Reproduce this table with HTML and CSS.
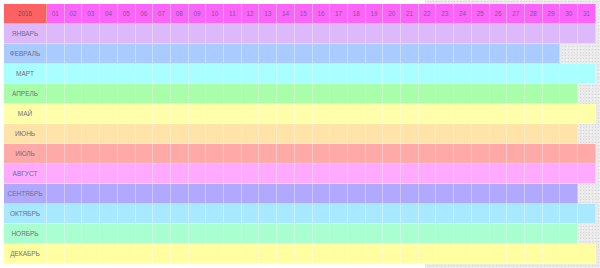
FILE: index.html
```html
<!DOCTYPE html>
<html lang="ru">
<head>
<meta charset="utf-8">
<title>Календарь 2016</title>
<link rel="stylesheet" href="styles.css">
</head>
<body>
<table class="cal">
<colgroup><col class="c-year"><col span="31" class="c-day"></colgroup>
<thead>
<tr class="head"><th class="year">2016</th><th>01</th><th>02</th><th>03</th><th>04</th><th>05</th><th>06</th><th>07</th><th>08</th><th>09</th><th>10</th><th>11</th><th>12</th><th>13</th><th>14</th><th>15</th><th>16</th><th>17</th><th>18</th><th>19</th><th>20</th><th>21</th><th>22</th><th>23</th><th>24</th><th>25</th><th>26</th><th>27</th><th>28</th><th>29</th><th>30</th><th>31</th></tr>
</thead>
<tbody id="body"></tbody>
</table>
<script src="app.js"></script>
</body>
</html>
```
FILE: app.js
```js
var months = [
  ["ЯНВАРЬ", 31, "m1"], ["ФЕВРАЛЬ", 29, "m2"], ["МАРТ", 31, "m3"],
  ["АПРЕЛЬ", 30, "m4"], ["МАЙ", 31, "m5"], ["ИЮНЬ", 30, "m6"],
  ["ИЮЛЬ", 31, "m7"], ["АВГУСТ", 31, "m8"], ["СЕНТЯБРЬ", 30, "m9"],
  ["ОКТЯБРЬ", 31, "m10"], ["НОЯБРЬ", 30, "m11"], ["ДЕКАБРЬ", 31, "m12"]
];
var tb = document.getElementById("body");
months.forEach(function (m) {
  var tr = document.createElement("tr");
  tr.className = "row " + m[2];
  var th = document.createElement("th");
  th.className = "month";
  th.textContent = m[0];
  tr.appendChild(th);
  for (var i = 0; i < m[1]; i++) {
    var td = document.createElement("td");
    tr.appendChild(td);
  }
  tb.appendChild(tr);
});
```
FILE: styles.css
```css
html, body {
  margin: 0;
  padding: 0;
}
body {
  width: 600px;
  height: 268px;
  overflow: hidden;
  font-family: "Liberation Sans", Arial, sans-serif;
  background-color: #e9e9e9;
  background-image:
    linear-gradient(to right, #fff 0, #fff 425px, transparent 425px),
    radial-gradient(circle, #d6d6d6 0.6px, transparent 0.9px),
    radial-gradient(circle, #f4f4f4 0.6px, transparent 0.9px);
  background-size: 100% 100%, 3px 3px, 4px 4px;
  background-position: 0 0, 0 0, 1px 2px;
  background-repeat: no-repeat, repeat, repeat;
}
.cal {
  margin: 4px 0 0 4px;
  width: 592px;
  table-layout: fixed;
  border-collapse: separate;
  border-spacing: 0;
}
.c-year {
  width: 43px;
}
.cal th, .cal td {
  height: 19px;
  padding: 0;
  border: 0;
  border-right: 1px solid rgba(255, 255, 255, 0.36);
  border-bottom: 1px solid rgba(255, 255, 255, 0.45);
  text-align: center;
  vertical-align: middle;
  font-weight: normal;
  overflow: hidden;
  white-space: nowrap;
}
.head th {
  background: #fa64f8;
  color: #80598a;
  font-size: 6.3px;
}
.head th.year {
  background: #fd6262;
  color: #7a4a4a;
}
.month {
  font-size: 6.5px;
  color: #707080;
}
.m1 > * { background: #ddb8fb; }
.m2 > * { background: #a9cbff; }
.m3 > * { background: #a9ffff; }
.m4 > * { background: #a9ffa9; }
.m5 > * { background: #ffffa9; }
.m6 > * { background: #ffe3a9; }
.m7 > * { background: #ffa9a9; }
.m8 > * { background: #ffa9ff; }
.m9 > * { background: #b1a9ff; }
.m10 > * { background: #a9e9ff; }
.m11 > * { background: #a9ffcf; }
.m12 > * { background: #ffffa2; }
```
